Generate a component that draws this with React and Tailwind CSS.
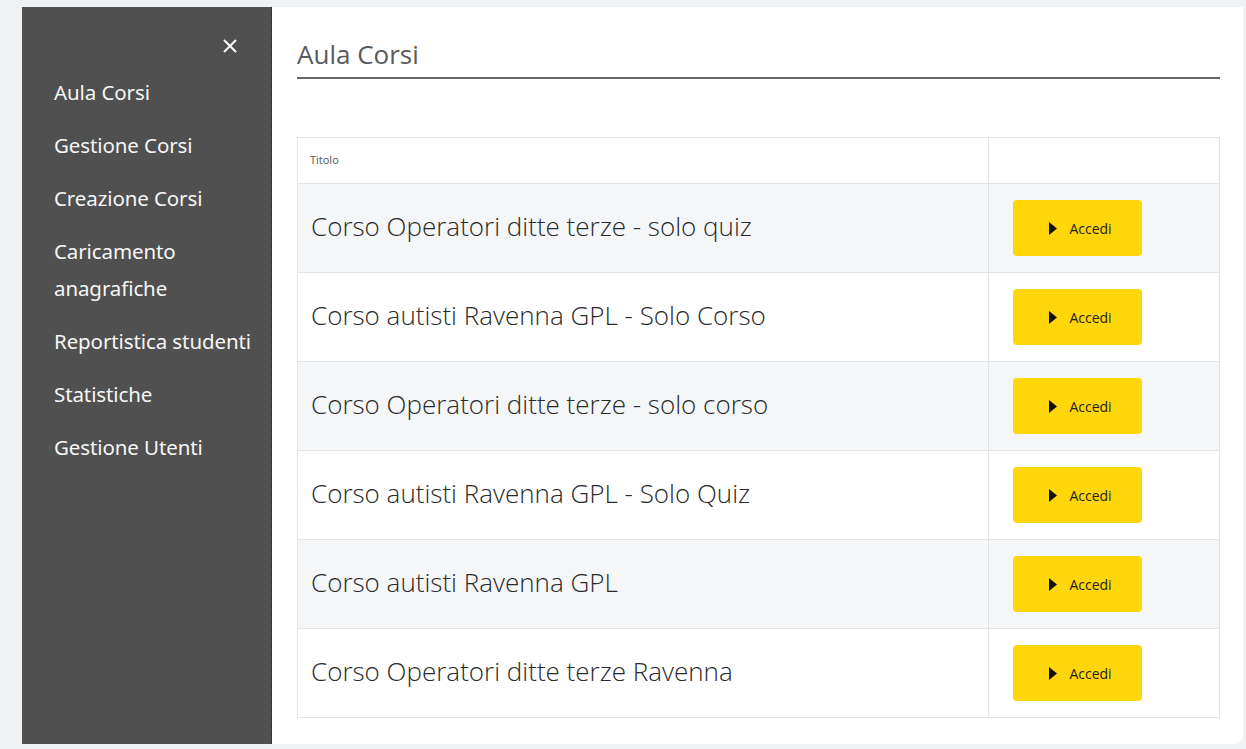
import React from 'react'

const menu = ['Aula Corsi', 'Gestione Corsi', 'Creazione Corsi', 'Caricamento anagrafiche', 'Reportistica studenti', 'Statistiche', 'Gestione Utenti']

const corsi = [
    'Corso Operatori ditte terze - solo quiz',
    'Corso autisti Ravenna GPL - Solo Corso',
    'Corso Operatori ditte terze - solo corso',
    'Corso autisti Ravenna GPL - Solo Quiz',
    'Corso autisti Ravenna GPL',
    'Corso Operatori ditte terze Ravenna',
]

const App = () => {
    return (
        <div className="min-h-[749px] bg-[#f0f1f5] pt-[7px] pb-[5px] pl-[22px] pr-[3px]" style={{ fontFamily: '"Open Sans", "Noto Sans", sans-serif' }}>
            <div className="flex h-[737px]">
                {/* sidebar */}
                <aside className="w-[250px] shrink-0 bg-[#505050] border-r border-dotted border-[#222]">
                    <div className="flex justify-end pr-[33px] pt-[31px]">
                        <svg width="16" height="16" viewBox="0 0 16 16" stroke="#fff" strokeWidth="2">
                            <path d="M2 2 L14 14 M14 2 L2 14" />
                        </svg>
                    </div>
                    <nav className="pl-[32px] pt-[20px] pr-1">
                        {menu.map(item => (
                            <div key={item} className="text-[20.5px] leading-[37px] text-[#f6f6f6] mb-[16px] font-normal tracking-[-0.1px]" style={{ fontFamily: '"Noto Sans", sans-serif' }}>
                                {item}
                            </div>
                        ))}
                    </nav>
                </aside>

                {/* main */}
                <main className="flex-1 bg-white rounded-br-[8px] pl-[25px] pr-[23px]">
                    <h1 className="text-[26px] text-[#5a5a5a] pt-[30px] pb-[6px] leading-[34px] border-b-2 border-[#666]">
                        Aula Corsi
                    </h1>

                    <table className="w-full mt-[58px] border-collapse border border-[#e3e4e6]">
                        <thead>
                            <tr className="h-[46px]">
                                <th className="text-left font-normal text-[11px] text-[#555] pl-[12px] border border-[#e3e4e6]">Titolo</th>
                                <th className="w-[231px] border border-[#e3e4e6]"></th>
                            </tr>
                        </thead>
                        <tbody>
                            {corsi.map((c, i) => (
                                <tr key={c} className={`h-[89px] ${i % 2 === 0 ? 'bg-[#f5f6f8]' : 'bg-white'}`}>
                                    <td className="pl-[13px] pb-[4px] text-[26px] font-light text-[#2a2a2a] border border-[#e3e4e6]">{c}</td>
                                    <td className="pl-[24px] border border-[#e3e4e6]">
                                        <button className="w-[129px] h-[56px] bg-[#ffd60a] rounded-[4px] flex items-center justify-center gap-[12px] pl-[6px] text-[14px] text-[#222]">
                                            <svg width="8" height="13" viewBox="0 0 8 13"><path d="M0 0 L8 6.5 L0 13 Z" fill="#111" /></svg>
                                            Accedi
                                        </button>
                                    </td>
                                </tr>
                            ))}
                        </tbody>
                    </table>
                </main>
            </div>
        </div>
    )
}

export default App
